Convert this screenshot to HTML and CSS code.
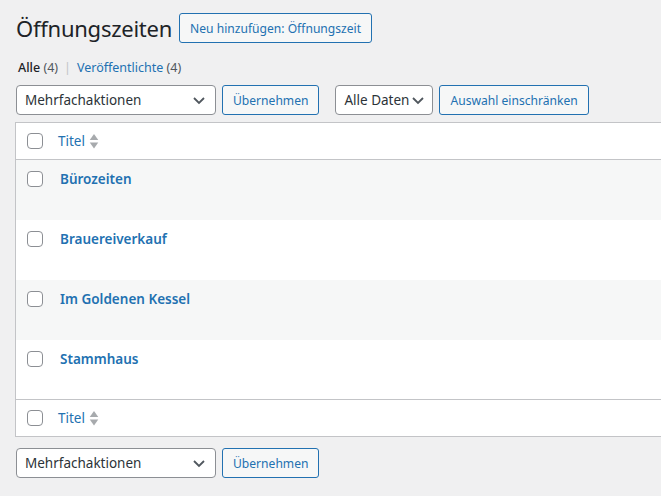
FILE: index.html
```html
<!DOCTYPE html>
<html lang="de">
<head>
<meta charset="utf-8">
<title>Öffnungszeiten</title>
<link rel="stylesheet" href="styles.css">
</head>
<body>
<div class="wrap">
  <div class="page-head">
    <h1 class="page-title">Öffnungszeiten</h1>
    <a class="btn btn-title">Neu hinzufügen: Öffnungszeit</a>
  </div>
  <ul class="subsubsub">
    <li class="current">Alle <span class="count">(4)</span></li>
    <li class="sep">|</li>
    <li><a class="link">Veröffentlichte <span class="count">(4)</span></a></li>
  </ul>
  <div class="tablenav">
    <div class="select wide"><span>Mehrfachaktionen</span><svg class="chev" viewBox="0 0 16 16"><path d="M3 6 L8 11 L13 6"/></svg></div>
    <a class="btn">Übernehmen</a>
    <div class="select narrow"><span>Alle Daten</span><svg class="chev" viewBox="0 0 16 16"><path d="M3 6 L8 11 L13 6"/></svg></div>
    <a class="btn">Auswahl einschränken</a>
  </div>
  <table class="list">
    <thead>
      <tr><td class="cb"><span class="checkbox"></span></td><th class="title-col"><a class="sort">Titel <svg class="arrows" viewBox="0 0 10 18"><path d="M5 1 L9.5 7.5 L0.5 7.5 Z"/><path d="M0.5 10 L9.5 10 L5 16.5 Z"/></svg></a></th></tr>
    </thead>
    <tbody>
      <tr class="alt"><td class="cb"><span class="checkbox"></span></td><td class="title-col"><a class="row-title">Bürozeiten</a></td></tr>
      <tr><td class="cb"><span class="checkbox"></span></td><td class="title-col"><a class="row-title">Brauereiverkauf</a></td></tr>
      <tr class="alt"><td class="cb"><span class="checkbox"></span></td><td class="title-col"><a class="row-title">Im Goldenen Kessel</a></td></tr>
      <tr><td class="cb"><span class="checkbox"></span></td><td class="title-col"><a class="row-title">Stammhaus</a></td></tr>
    </tbody>
    <tfoot>
      <tr><td class="cb"><span class="checkbox"></span></td><th class="title-col"><a class="sort">Titel <svg class="arrows" viewBox="0 0 10 18"><path d="M5 1 L9.5 7.5 L0.5 7.5 Z"/><path d="M0.5 10 L9.5 10 L5 16.5 Z"/></svg></a></th></tr>
    </tfoot>
  </table>
  <div class="tablenav bottom">
    <div class="select wide"><span>Mehrfachaktionen</span><svg class="chev" viewBox="0 0 16 16"><path d="M3 6 L8 11 L13 6"/></svg></div>
    <a class="btn">Übernehmen</a>
  </div>
</div>
</body>
</html>
```
FILE: styles.css
```css
html, body {
  margin: 0;
  padding: 0;
  background: #f0f0f1;
  overflow: hidden;
}
body {
  font-family: "Noto Sans", "Open Sans", sans-serif;
  color: #1d2327;
  font-size: 13px;
  width: 661px;
  height: 496px;
}
.wrap {
  padding: 13px 0 0 15px;
}
.page-head {
  display: flex;
  align-items: center;
  height: 30px;
}
.page-title {
  margin: 0 7px 0 1px;
  font-size: 22px;
  font-weight: 400;
  line-height: 30px;
  letter-spacing: -0.25px;
}
.btn {
  display: inline-flex;
  align-items: center;
  box-sizing: border-box;
  height: 30px;
  padding: 0 10px;
  border: 1px solid #2271b1;
  border-radius: 3px;
  background: #f6f7f7;
  color: #2271b1;
  font-size: 12.1px;
  white-space: nowrap;
}
.subsubsub {
  list-style: none;
  margin: 15px 0 0 3px;
  padding: 0;
  display: flex;
  gap: 5px;
  font-size: 12.5px;
  line-height: 20px;
}
.subsubsub .current { color: #1d2327; font-weight: 500; }
.subsubsub .count { color: #50575e; font-weight: 400; }
.subsubsub .sep { color: #c3c4c7; padding: 0 1px; }
.subsubsub .link { color: #2271b1; }
.subsubsub .link .count { color: #50575e; }
.tablenav {
  display: flex;
  align-items: center;
  margin: 7px 0 0 1px;
  height: 30px;
}
.select {
  box-sizing: border-box;
  height: 30px;
  border: 1px solid #8c8f94;
  border-radius: 4px;
  background: #fff;
  display: flex;
  align-items: center;
  justify-content: space-between;
  padding: 0 8px 0 8px;
  font-size: 13.5px;
  color: #2c3338;
}
.select.wide { width: 200px; margin-right: 6px; }
.select.narrow { width: 98px; margin-left: 16px; margin-right: 6px; padding-right: 6px; }
.chev {
  width: 16px;
  height: 16px;
  fill: none;
  stroke: #50575e;
  stroke-width: 1.8;
}
.list {
  margin-top: 7px;
  border-collapse: collapse;
  width: 700px;
  background: #fff;
  border: 1px solid #c3c4c7;
}
.list td, .list th {
  padding: 0;
  text-align: left;
  vertical-align: top;
}
.list thead tr { height: 37px; border-bottom: 1px solid #c3c4c7; }
.list tfoot tr { height: 37px; border-top: 1px solid #c3c4c7; }
.list thead td, .list thead th, .list tfoot td, .list tfoot th { vertical-align: middle; }
.list tbody tr { height: 60px; }
.list tbody tr.alt { background: #f6f7f7; }
.cb { width: 42px; }
.checkbox {
  display: block;
  box-sizing: border-box;
  width: 16px;
  height: 16px;
  margin-left: 11px;
  border: 1px solid #8c8f94;
  border-radius: 4px;
  background: #fff;
}
.list tbody .checkbox { margin-top: 11px; }
.list tbody .title-col { padding-top: 10px; }
.sort {
  display: inline-flex;
  align-items: center;
  color: #2271b1;
  font-size: 13.5px;
  font-weight: 400;
  gap: 4px;
}
.arrows {
  width: 10px;
  height: 17px;
  fill: #a7aaad;
}
.row-title {
  color: #2271b1;
  font-weight: 600;
  font-size: 13.5px;
  margin-left: 2px;
}
.tablenav.bottom { margin-top: 11px; }
```
